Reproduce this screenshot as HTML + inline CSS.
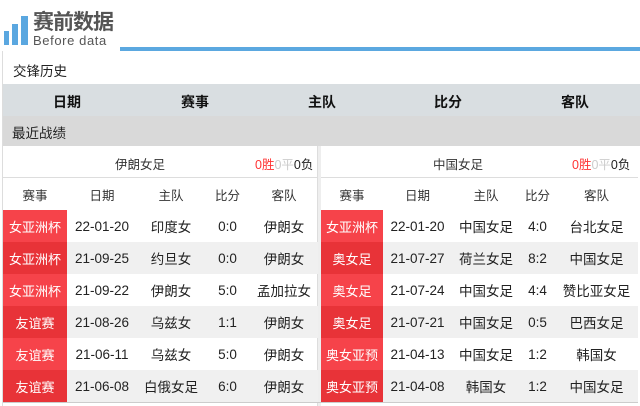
<!DOCTYPE html>
<html><head><meta charset="utf-8"><style>
*{margin:0;padding:0;box-sizing:border-box}
body{width:640px;height:406px;background:#fff;font-family:"Liberation Sans","Noto Sans CJK SC",sans-serif;position:relative;overflow:hidden;color:#222}
.abs{position:absolute}
table{border-collapse:collapse;table-layout:fixed;position:absolute;top:178px}
td{height:32px;text-align:center;font-size:13.5px;padding:0;white-space:nowrap}
tr.g td{background:#f0f0f0}
td.r{color:#fff;background:#f6434a;font-size:13px}
tr.g td.r{background:#e83338}
tr.h td{font-size:12.5px;color:#333}
</style></head><body>
<div class="abs" style="left:4px;top:31px;width:5px;height:14px;background:#5aa7e0"></div>
<div class="abs" style="left:12px;top:24px;width:6px;height:21px;background:#5aa7e0"></div>
<div class="abs" style="left:21px;top:16px;width:7px;height:29px;background:#5aa7e0"></div>
<div class="abs" style="left:33px;top:11px;font-size:21px;font-weight:bold;color:#555;letter-spacing:-1px;line-height:24px">赛前数据</div>
<div class="abs" style="left:33px;top:34px;font-size:13px;color:#555;letter-spacing:0.6px;line-height:14px">Before data</div>
<div class="abs" style="left:120px;top:47px;width:520px;height:4px;background:#5ba8e0"></div>
<div class="abs" style="left:2px;top:51px;width:1px;height:355px;background:#ddd"></div>
<div class="abs" style="left:13px;top:60px;font-size:13.5px">交锋历史</div>
<div class="abs" style="left:3px;top:84px;width:637px;height:32px;background:#d9dee1;font-weight:bold;font-size:14px;color:#111">
<span class="abs" style="left:50px;top:8px">日期</span><span class="abs" style="left:178px;top:8px">赛事</span><span class="abs" style="left:305px;top:8px">主队</span><span class="abs" style="left:431px;top:8px">比分</span><span class="abs" style="left:558px;top:8px">客队</span></div>
<div class="abs" style="left:3px;top:116px;width:637px;height:30px;background:#d9d9d9;font-size:13.5px;color:#222"><span class="abs" style="left:9px;top:6px">最近战绩</span></div>
<div class="abs" style="left:3px;top:146px;width:315px;height:260px;border-right:1px solid #ddd"></div>
<div class="abs" style="left:318px;top:146px;width:3px;height:260px;background:#eee"></div>
<div class="abs" style="left:3px;top:146px;width:315px;height:32px;border-bottom:1px solid #ddd;font-size:12.5px">
<span class="abs" style="left:112px;top:8px;color:#333">伊朗女足</span><span class="abs" style="left:252px;top:8px"><span style="color:#f33">0胜</span><span style="color:#ccc">0平</span>0负</span></div>
<div class="abs" style="left:321px;top:146px;width:317px;height:32px;border-bottom:1px solid #ddd;font-size:12.5px">
<span class="abs" style="left:112px;top:8px;color:#333">中国女足</span><span class="abs" style="left:251px;top:8px"><span style="color:#f33">0胜</span><span style="color:#ccc">0平</span>0负</span></div>
<table style="left:3px;width:315px">
<col style="width:64px"><col style="width:70px"><col style="width:68px"><col style="width:45px"><col style="width:68px">
<tr class="h"><td>赛事</td><td>日期</td><td>主队</td><td>比分</td><td>客队</td></tr>
<tr><td class="r">女亚洲杯</td><td>22-01-20</td><td>印度女</td><td>0:0</td><td>伊朗女</td></tr>
<tr class="g"><td class="r">女亚洲杯</td><td>21-09-25</td><td>约旦女</td><td>0:0</td><td>伊朗女</td></tr>
<tr><td class="r">女亚洲杯</td><td>21-09-22</td><td>伊朗女</td><td>5:0</td><td>孟加拉女</td></tr>
<tr class="g"><td class="r">友谊赛</td><td>21-08-26</td><td>乌兹女</td><td>1:1</td><td>伊朗女</td></tr>
<tr><td class="r">友谊赛</td><td>21-06-11</td><td>乌兹女</td><td>5:0</td><td>伊朗女</td></tr>
<tr class="g"><td class="r">友谊赛</td><td>21-06-08</td><td>白俄女足</td><td>6:0</td><td>伊朗女</td></tr>
</table>
<table style="left:321px;width:317px">
<col style="width:62px"><col style="width:69px"><col style="width:68px"><col style="width:35px"><col style="width:83px">
<tr class="h"><td>赛事</td><td>日期</td><td>主队</td><td>比分</td><td>客队</td></tr>
<tr><td class="r">女亚洲杯</td><td>22-01-20</td><td>中国女足</td><td>4:0</td><td>台北女足</td></tr>
<tr class="g"><td class="r">奥女足</td><td>21-07-27</td><td>荷兰女足</td><td>8:2</td><td>中国女足</td></tr>
<tr><td class="r">奥女足</td><td>21-07-24</td><td>中国女足</td><td>4:4</td><td>赞比亚女足</td></tr>
<tr class="g"><td class="r">奥女足</td><td>21-07-21</td><td>中国女足</td><td>0:5</td><td>巴西女足</td></tr>
<tr><td class="r">奥女亚预</td><td>21-04-13</td><td>中国女足</td><td>1:2</td><td>韩国女</td></tr>
<tr class="g"><td class="r">奥女亚预</td><td>21-04-08</td><td>韩国女</td><td>1:2</td><td>中国女足</td></tr>
</table>
<div class="abs" style="left:3px;top:402px;width:635px;height:1px;background:#ccc"></div>
</body></html>
